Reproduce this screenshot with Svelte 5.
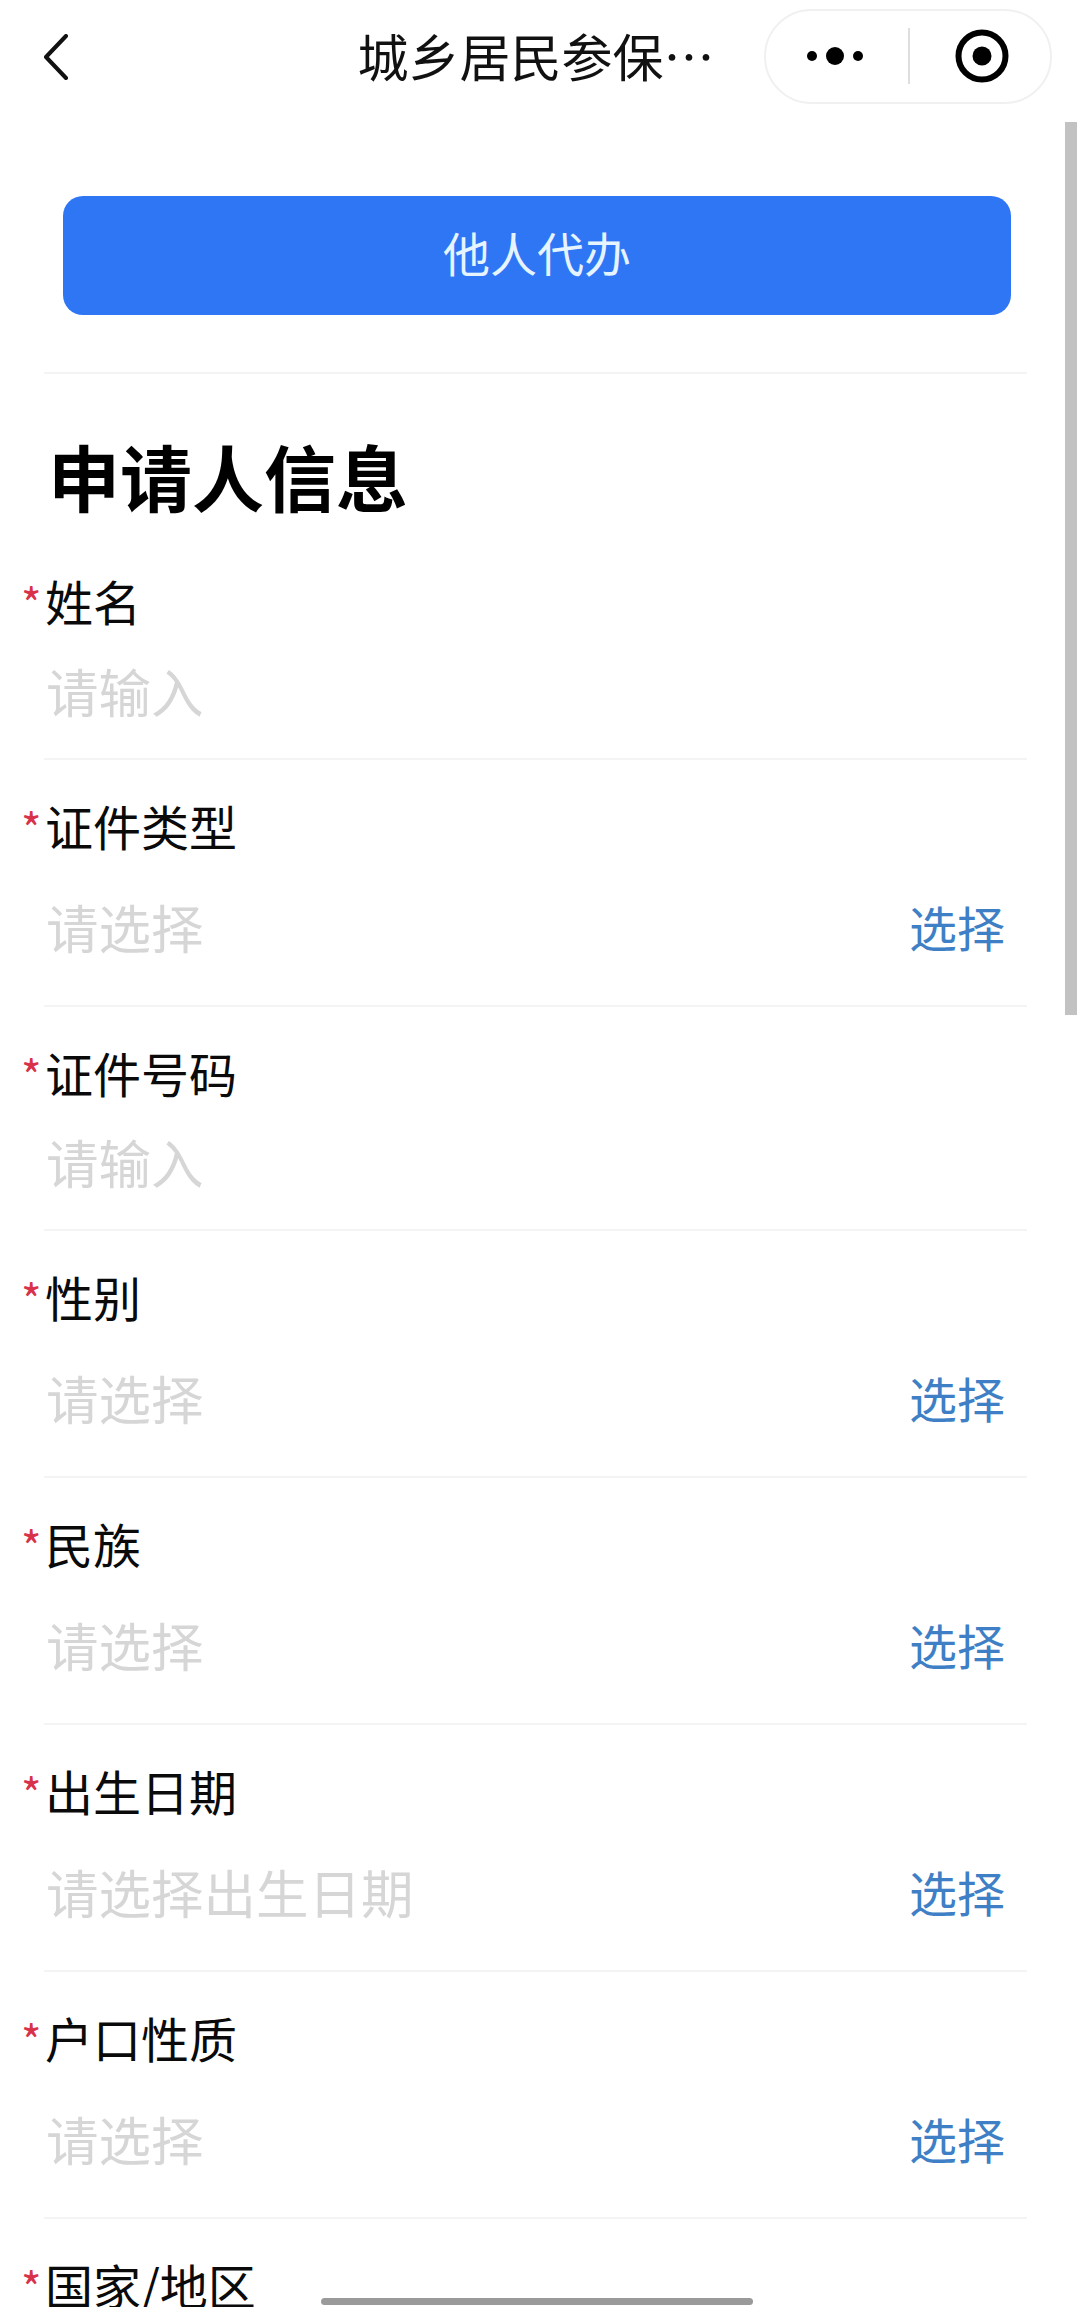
<script lang="ts">
  type Field = {
    label: string
    placeholder: string
    select?: boolean
  }

  const fields: Field[] = [
    { label: "姓名", placeholder: "请输入" },
    { label: "证件类型", placeholder: "请选择", select: true },
    { label: "证件号码", placeholder: "请输入" },
    { label: "性别", placeholder: "请选择", select: true },
    { label: "民族", placeholder: "请选择", select: true },
    { label: "出生日期", placeholder: "请选择出生日期", select: true },
    { label: "户口性质", placeholder: "请选择", select: true },
    { label: "国家/地区", placeholder: "请选择", select: true },
  ]
</script>

<div class="page" lang="zh-CN">
  <header class="nav">
    <svg class="back" viewBox="0 0 26 46" width="26" height="46" aria-hidden="true">
      <path d="M23 2 L3 23 L23 44" fill="none" stroke="#111" stroke-width="4" stroke-linecap="round" stroke-linejoin="round" />
    </svg>
    <div class="nav-title">城乡居民参保…</div>
    <div class="capsule">
      <svg class="more" viewBox="0 0 66 24" width="66" height="24" aria-hidden="true">
        <circle cx="5" cy="12" r="5" fill="#000" />
        <circle cx="28" cy="12" r="9" fill="#000" />
        <circle cx="51" cy="12" r="5" fill="#000" />
      </svg>
      <span class="capsule-line"></span>
      <svg class="target" viewBox="0 0 54 54" width="54" height="54" aria-hidden="true">
        <circle cx="27" cy="27" r="23.5" fill="none" stroke="#000" stroke-width="6" />
        <circle cx="27" cy="27" r="9.5" fill="#000" />
      </svg>
    </div>
  </header>

  <main class="content">
    <div class="agent-wrap">
      <button class="agent">他人代办</button>
    </div>

    <h1>申请人信息</h1>

    {#each fields as field, i}
      <div class="row" class:first={i === 0}>
        <div class="label"><span class="star">*</span>{field.label}</div>
        <div class="value" class:tall={field.select}>
          <span class="placeholder">{field.placeholder}</span>
          {#if field.select}
            <span class="pick">选择</span>
          {/if}
        </div>
      </div>
    {/each}
  </main>

  <div class="scrollbar"></div>
  <div class="home-bar"></div>
</div>

<style>
  :global(body) {
    margin: 0;
    background: #fff;
  }

  .page {
    position: relative;
    height: 2307px;
    overflow: hidden;
    background: #fff;
    font-family: "Noto Sans CJK SC", "Noto Sans", sans-serif;
    color: #000;
  }

  .nav {
    display: grid;
    grid-template-columns: 1fr auto 1fr;
    align-items: center;
    height: 112px;
    padding: 0 25px 0 43px;
  }

  .back {
    justify-self: start;
    margin-top: 2px;
  }

  .nav-title {
    font-size: 51px;
    line-height: 60px;
    color: #111;
    white-space: nowrap;
    margin-left: -23px;
    margin-bottom: 3px;
  }

  .capsule {
    justify-self: end;
    box-sizing: border-box;
    width: 288px;
    height: 95px;
    display: flex;
    align-items: center;
    border: 2px solid #f0f0f0;
    border-radius: 48px;
  }

  .more {
    margin-left: 41px;
  }

  .capsule-line {
    width: 2px;
    height: 56px;
    margin-left: 35px;
    background: #dedede;
  }

  .target {
    margin-left: 45px;
  }

  .agent-wrap {
    padding: 84px 16px 57px 19px;
    border-bottom: 2px solid #f4f4f4;
    margin: 0 50px 0 44px;
  }

  .agent {
    display: block;
    width: 100%;
    height: 119px;
    padding: 0 0 8px;
    border: 0;
    border-radius: 20px;
    background: #2f76f5;
    color: #e6f4ff;
    font: inherit;
    font-size: 47px;
  }

  h1 {
    margin: 51px 0 4px 48px;
    font-size: 72px;
    line-height: 100px;
    font-weight: 700;
    color: #000;
  }

  .row {
    margin: 0 50px 0 44px;
    padding-top: 40px;
    border-bottom: 2px solid #f4f4f4;
  }

  .row.first {
    padding-top: 46px;
  }

  .label {
    position: relative;
    height: 50px;
    line-height: 50px;
    font-size: 48px;
    padding-left: 1px;
    white-space: nowrap;
    color: #0a0a0a;
  }

  .star {
    position: absolute;
    left: -23px;
    top: 2px;
    font-size: 44px;
    color: #d8324a;
  }

  .value {
    box-sizing: border-box;
    display: flex;
    align-items: center;
    justify-content: space-between;
    height: 132px;
    padding: 0 22px 4px 2px;
  }

  .first .value {
    height: 133px;
  }

  .value.tall {
    height: 155px;
  }

  .placeholder {
    font-size: 52.5px;
    line-height: 60px;
    color: #d6d6d6;
  }

  .pick {
    font-size: 48px;
    line-height: 60px;
    color: #3e7fc6;
  }

  .scrollbar {
    position: absolute;
    top: 122px;
    right: 0;
    width: 12px;
    height: 893px;
    background: #c2c2c2;
  }

  .home-bar {
    position: absolute;
    left: 321px;
    bottom: 2px;
    width: 432px;
    height: 7px;
    border-radius: 4px;
    background: #9a9a9a;
  }
</style>
